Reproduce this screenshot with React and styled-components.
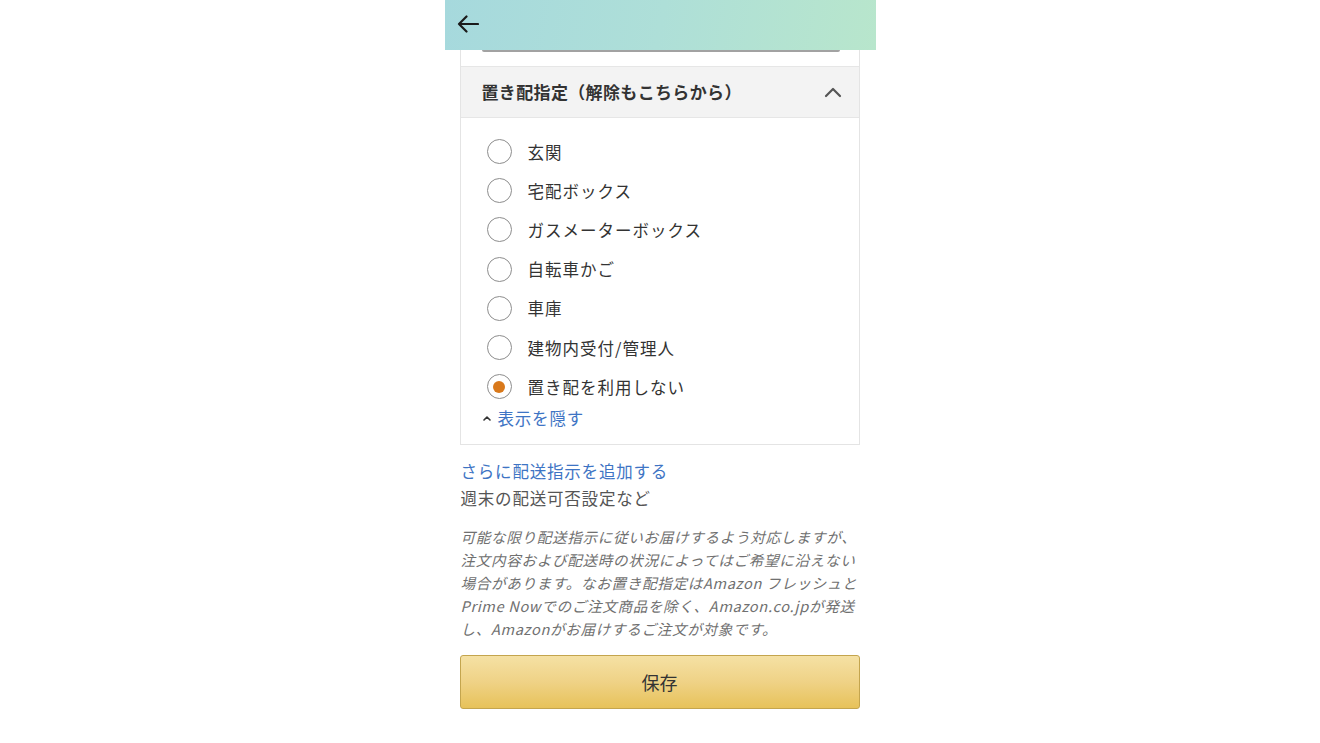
import styled, { createGlobalStyle } from "styled-components";

const GlobalStyle = createGlobalStyle`
  html, body {
    margin: 0;
    padding: 0;
    background: #ffffff;
  }
  body {
    font-family: "Noto Sans CJK JP", "Noto Sans", "Liberation Sans", sans-serif;
    color: #333333;
  }
`;

const Screen = styled.div`
  width: 431px;
  margin: 0 auto;
  min-height: 743px;
  background: #ffffff;
`;

const TopBar = styled.header`
  height: 50px;
  display: flex;
  align-items: center;
  padding-left: 10px;
  background: linear-gradient(100deg, #a6d9dd 0%, #aedfd8 50%, #b8e6cc 100%);
`;

const BackButton = styled.button`
  display: flex;
  align-items: center;
  justify-content: center;
  width: 26px;
  height: 26px;
  margin-top: -3px;
  padding: 0;
  border: 0;
  background: transparent;
  cursor: pointer;
`;

const Card = styled.section`
  margin: 0 16px 0 15px;
  border-left: 1px solid #e4e4e4;
  border-right: 1px solid #e4e4e4;
  border-bottom: 1px solid #e4e4e4;
  background: #ffffff;
`;

// bottom edge of the button that is scrolled under the top bar
const HiddenButtonEdge = styled.div`
  height: 2px;
  margin: 0 19px 14px 21px;
  background: #a2a2a2;
  border-radius: 0 0 4px 4px;
`;

const SectionHeader = styled.div`
  height: 50px;
  display: flex;
  align-items: center;
  justify-content: space-between;
  padding: 0 17px 0 21px;
  background: #f3f3f3;
  border-top: 1px solid #e6e6e6;
  border-bottom: 1px solid #e6e6e6;
`;

const SectionTitle = styled.h2`
  margin: -2px 0 0 0;
  font-size: 17px;
  font-weight: 700;
  color: #333333;
  letter-spacing: 0.35px;
`;

const OptionList = styled.div`
  display: flex;
  flex-direction: column;
  padding: 14px 0 14px 26px;
`;

const OptionRow = styled.label`
  display: flex;
  align-items: center;
  height: 39.2px;
  cursor: pointer;
`;

const RadioCircle = styled.span`
  position: relative;
  flex: none;
  width: 23px;
  height: 23px;
  border: 1.5px solid #8d8d8d;
  border-radius: 50%;
  background: #ffffff;

  &::after {
    content: "";
    display: ${(props) => (props.$checked ? "block" : "none")};
    position: absolute;
    left: 50%;
    top: 50%;
    width: 12px;
    height: 12px;
    margin: -6px 0 0 -6px;
    border-radius: 50%;
    background: #d9791b;
  }
`;

const OptionLabel = styled.span`
  margin-left: 16px;
  font-size: 16.5px;
  letter-spacing: 1px;
  color: #333333;
`;

const ToggleLink = styled.a`
  display: flex;
  align-items: center;
  gap: 7px;
  margin-left: -4px;
  height: 24px;
  font-size: 16.5px;
  letter-spacing: 0.8px;
  color: #3e74c4;
  text-decoration: none;
`;

const Notes = styled.div`
  padding: 13px 16px 0 16px;
`;

const MoreLink = styled.a`
  display: block;
  font-size: 16.5px;
  line-height: 27px;
  letter-spacing: 0.8px;
  color: #3e74c4;
  text-decoration: none;
`;

const SubText = styled.p`
  margin: 0;
  font-size: 16.5px;
  line-height: 27px;
  letter-spacing: 0.8px;
  color: #555555;
`;

const Disclaimer = styled.p`
  margin: 13px 0 0 0;
  font-size: 14.6px;
  line-height: 23px;
  letter-spacing: 0.65px;
  font-style: italic;
  color: #707070;
  white-space: nowrap;
`;

const SaveButton = styled.button`
  display: block;
  width: 400px;
  height: 54px;
  margin: 15px 0 0 -1px;
  border: 1px solid #c4a54e;
  border-radius: 3px;
  background: linear-gradient(180deg, #f5e1a4 0%, #efd286 50%, #e7c25a 100%);
  font-family: inherit;
  font-size: 18px;
  color: #333333;
  cursor: pointer;
`;

const options = [
  "玄関",
  "宅配ボックス",
  "ガスメーターボックス",
  "自転車かご",
  "車庫",
  "建物内受付/管理人",
  "置き配を利用しない",
];

const App = () => {
  const selected = "置き配を利用しない";
  return (
    <>
      <GlobalStyle />
      <Screen>
        <TopBar>
          <BackButton aria-label="戻る">
            <svg width="22" height="18" viewBox="0 0 22 18" fill="none">
              <path
                d="M21 9H2M9.5 1.5L2 9l7.5 7.5"
                stroke="#1a1a1a"
                strokeWidth="2.2"
                strokeLinecap="round"
                strokeLinejoin="round"
              />
            </svg>
          </BackButton>
        </TopBar>

        <Card>
          <HiddenButtonEdge />
          <SectionHeader>
            <SectionTitle>置き配指定（解除もこちらから）</SectionTitle>
            <svg width="18" height="11" viewBox="0 0 18 11" fill="none">
              <path
                d="M2 9l7-7 7 7"
                stroke="#555555"
                strokeWidth="2.2"
                strokeLinecap="round"
                strokeLinejoin="round"
              />
            </svg>
          </SectionHeader>
          <OptionList>
            {options.map((opt) => (
              <OptionRow key={opt}>
                <RadioCircle $checked={opt === selected} />
                <OptionLabel>{opt}</OptionLabel>
              </OptionRow>
            ))}
            <ToggleLink href="#">
              <svg width="8" height="6" viewBox="0 0 8 6" fill="none">
                <path
                  d="M1 5l3-3 3 3"
                  stroke="#333333"
                  strokeWidth="1.6"
                  strokeLinecap="round"
                  strokeLinejoin="round"
                />
              </svg>
              表示を隠す
            </ToggleLink>
          </OptionList>
        </Card>

        <Notes>
          <MoreLink href="#">さらに配送指示を追加する</MoreLink>
          <SubText>週末の配送可否設定など</SubText>
          <Disclaimer>
            可能な限り配送指示に従いお届けするよう対応しますが、
            <br />
            注文内容および配送時の状況によってはご希望に沿えない
            <br />
            場合があります。なお置き配指定はAmazon フレッシュと
            <br />
            Prime Nowでのご注文商品を除く、Amazon.co.jpが発送
            <br />
            し、Amazonがお届けするご注文が対象です。
          </Disclaimer>
          <SaveButton>保存</SaveButton>
        </Notes>
      </Screen>
    </>
  );
};

export default App;
